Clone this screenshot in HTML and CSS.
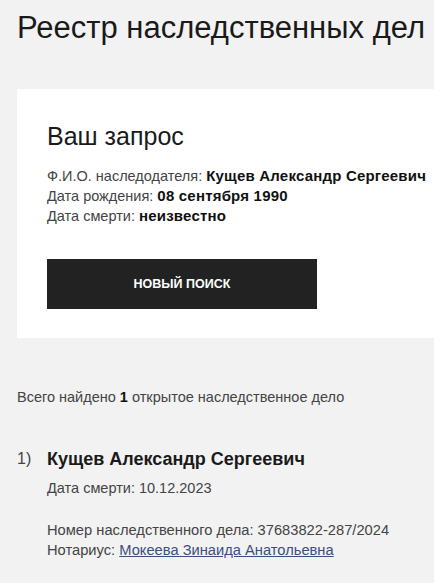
FILE: index.html
```html
<!DOCTYPE html>
<html lang="ru">

<head>
    <meta charset="UTF-8">
    <meta name="viewport" content="width=device-width, initial-scale=1.0">
    <title>Реестр наследственных дел</title>
    <link rel="stylesheet" href="styles.css">
</head>

<body>
    <div class="page">
        <h1 class="page-title">Реестр наследственных дел</h1>

        <div class="request-card">
            <h2 class="request-title">Ваш запрос</h2>
            <div class="request-info">
                <div>Ф.И.О. наследодателя: <b>Кущев Александр Сергеевич</b></div>
                <div>Дата рождения: <b>08 сентября 1990</b></div>
                <div>Дата смерти: <b>неизвестно</b></div>
            </div>
            <button class="search-button">НОВЫЙ ПОИСК</button>
        </div>

        <p class="found-text">Всего найдено <b>1</b> открытое наследственное дело</p>

        <div class="case-item">
            <div class="case-num">1)</div>
            <div class="case-body">
                <div class="case-name">Кущев Александр Сергеевич</div>
                <div class="case-date">Дата смерти: 10.12.2023</div>
                <div class="case-details">
                    <div>Номер наследственного дела: 37683822-287/2024</div>
                    <div>Нотариус: <a href="#" class="notary-link">Мокеева Зинаида Анатольевна</a></div>
                </div>
            </div>
        </div>
    </div>
</body>

</html>
```

FILE: styles.css
```css
body {
    margin: 0;
    background-color: #f2f2f2;
    color: #333;
    font-family: "Liberation Sans", Arial, sans-serif;
    overflow: hidden;
}

.page {
    padding: 0 0 0 17px;
}

.page-title {
    margin: 0;
    padding-top: 11px;
    font-size: 31px;
    font-weight: normal;
    color: #1a1a1a;
    white-space: nowrap;
    line-height: 34px;
}

/* Request card */
.request-card {
    background-color: #fff;
    margin-top: 44px;
    padding: 32px 30px 29px 30px;
}

.request-title {
    margin: 0;
    font-size: 25px;
    font-weight: normal;
    color: #1a1a1a;
    line-height: 30px;
}

.request-info {
    margin-top: 15px;
    font-size: 14.5px;
    line-height: 20px;
    color: #444;
    white-space: nowrap;
}

.request-info b {
    color: #111;
    font-size: 15px;
    letter-spacing: 0.2px;
}

.search-button {
    margin-top: 33px;
    width: 270px;
    height: 50px;
    border: none;
    background-color: #222;
    color: #fff;
    font-family: "Liberation Sans", Arial, sans-serif;
    font-weight: bold;
    font-size: 12.5px;
    display: block;
}

/* Results */
.found-text {
    margin: 49px 0 0 0;
    font-size: 14.5px;
    line-height: 20px;
    color: #444;
}

.found-text b {
    color: #111;
}

.case-item {
    display: flex;
    margin-top: 40px;
}

.case-num {
    width: 30px;
    font-size: 16px;
    line-height: 24px;
    color: #444;
}

.case-name {
    font-size: 18px;
    font-weight: bold;
    line-height: 24px;
    color: #1a1a1a;
}

.case-date {
    margin-top: 7px;
    font-size: 14.5px;
    line-height: 20px;
    color: #444;
}

.case-details {
    margin-top: 22px;
    font-size: 14.7px;
    line-height: 20px;
    color: #444;
    white-space: nowrap;
}

.notary-link {
    color: #3b4f7e;
}
```
